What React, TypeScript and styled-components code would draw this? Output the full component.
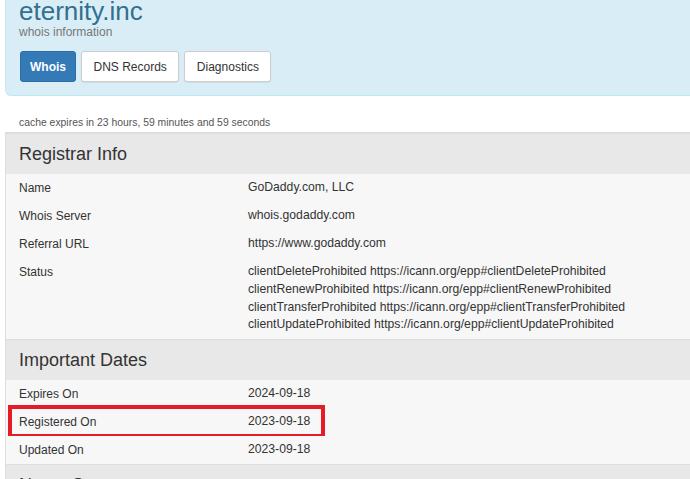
import styled, { createGlobalStyle } from "styled-components";

interface Field {
  label: string;
  value: string[];
  highlighted?: boolean;
}

interface Section {
  title: string;
  fields: Field[];
}

const sections: Section[] = [
  {
    title: "Registrar Info",
    fields: [
      { label: "Name", value: ["GoDaddy.com, LLC"] },
      { label: "Whois Server", value: ["whois.godaddy.com"] },
      { label: "Referral URL", value: ["https://www.godaddy.com"] },
      {
        label: "Status",
        value: [
          "clientDeleteProhibited https://icann.org/epp#clientDeleteProhibited",
          "clientRenewProhibited https://icann.org/epp#clientRenewProhibited",
          "clientTransferProhibited https://icann.org/epp#clientTransferProhibited",
          "clientUpdateProhibited https://icann.org/epp#clientUpdateProhibited",
        ],
      },
    ],
  },
  {
    title: "Important Dates",
    fields: [
      { label: "Expires On", value: ["2024-09-18"] },
      { label: "Registered On", value: ["2023-09-18"], highlighted: true },
      { label: "Updated On", value: ["2023-09-18"] },
    ],
  },
  {
    title: "Name Servers",
    fields: [
      { label: "NS1.GODADDY.COM", value: ["ns1.godaddy.com"] },
      { label: "NS2.GODADDY.COM", value: ["ns2.godaddy.com"] },
    ],
  },
];

const tabs = ["Whois", "DNS Records", "Diagnostics"];

const App = () => {
  return (
    <Page>
      <GlobalStyle />
      <Inner>
        <Jumbotron>
          <Title>eternity.inc</Title>
          <Subtitle>whois information</Subtitle>
          <TabBar>
            {tabs.map((tab, idx) => (
              <TabButton key={tab} $active={idx === 0}>
                {tab}
              </TabButton>
            ))}
          </TabBar>
        </Jumbotron>
        <CacheNote>cache expires in 23 hours, 59 minutes and 59 seconds</CacheNote>
        <Panel>
          {sections.map((section) => (
            <div key={section.title}>
              <PanelHeading>{section.title}</PanelHeading>
              <Rows>
                {section.fields.map((field) => (
                  <Row key={field.label}>
                    <Label>{field.label}</Label>
                    <Value>
                      {field.value.map((line) => (
                        <div key={line}>{line}</div>
                      ))}
                    </Value>
                    {field.highlighted && <Highlight />}
                  </Row>
                ))}
              </Rows>
            </div>
          ))}
        </Panel>
      </Inner>
    </Page>
  );
};

export default App;

const GlobalStyle = createGlobalStyle`
  html, body {
    margin: 0;
    padding: 0;
    background: #ffffff;
  }
  body {
    font-family: "Liberation Sans", Arial, sans-serif;
    color: #333333;
    overflow: hidden;
  }
`;

const Page = styled.div`
  width: 690px;
  height: 479px;
  overflow: hidden;
  padding-left: 5px;
  box-sizing: border-box;
`;

const Inner = styled.div`
  width: 720px;
`;

const Jumbotron = styled.div`
  background: #d9edf7;
  border-left: 1px solid #c9e6f3;
  border-bottom: 1px solid #bce8f1;
  border-bottom-left-radius: 6px;
  padding: 0 13px 13px 14px;
`;

const Title = styled.h1`
  margin: -2px 0 0 -1px;
  font-size: 26px;
  line-height: 26px;
  font-weight: 400;
  color: #31708f;
`;

const Subtitle = styled.div`
  font-size: 12px;
  line-height: 16px;
  color: #777777;
  margin-left: -1px;
`;

const TabBar = styled.div`
  display: flex;
  gap: 5px;
  margin-top: 11px;
`;

const TabButton = styled.button<{ $active: boolean }>`
  height: 31px;
  padding: 0 ${(p) => (p.$active ? "9px" : "11.5px")};
  font-family: "Liberation Sans", Arial, sans-serif;
  font-size: 12px;
  font-weight: ${(p) => (p.$active ? 700 : 400)};
  color: ${(p) => (p.$active ? "#ffffff" : "#333333")};
  background: ${(p) => (p.$active ? "#337ab7" : "#ffffff")};
  border: 1px solid ${(p) => (p.$active ? "#2e6da4" : "#cccccc")};
  border-radius: 3px;
  box-shadow: ${(p) => (p.$active ? "none" : "0 1px 1px rgba(0,0,0,0.06)")};
`;

const CacheNote = styled.div`
  font-size: 10.4px;
  line-height: 14px;
  color: #555555;
  padding: 20px 0 0 14px;
  height: 16px;
`;

const Panel = styled.div`
  border: 1px solid #dddddd;
  border-right: none;
  background: #f7f7f7;
`;

const PanelHeading = styled.div`
  background: #e8e8e8;
  border-top: 1px solid #dedede;
  padding: 10px 13px;
  font-size: 18px;
  line-height: 20px;
  color: #333333;
  height: 20px;
`;

const Rows = styled.div`
  display: flex;
  flex-direction: column;
`;

const Row = styled.div`
  position: relative;
  display: grid;
  grid-template-columns: 242px 1fr;
  padding: 5px 0;
  font-size: 12px;
  line-height: 18px;
  background: #f7f7f7;
`;

const Label = styled.div`
  padding-left: 13px;
  color: #333333;
`;

const Value = styled.div`
  color: #333333;
  font-size: 12.2px;
  line-height: 17.8px;
`;

const Highlight = styled.div`
  position: absolute;
  left: 2px;
  top: -3px;
  width: 317px;
  height: 33px;
  border: 4px solid #e31d25;
  box-sizing: border-box;
  pointer-events: none;
`;
